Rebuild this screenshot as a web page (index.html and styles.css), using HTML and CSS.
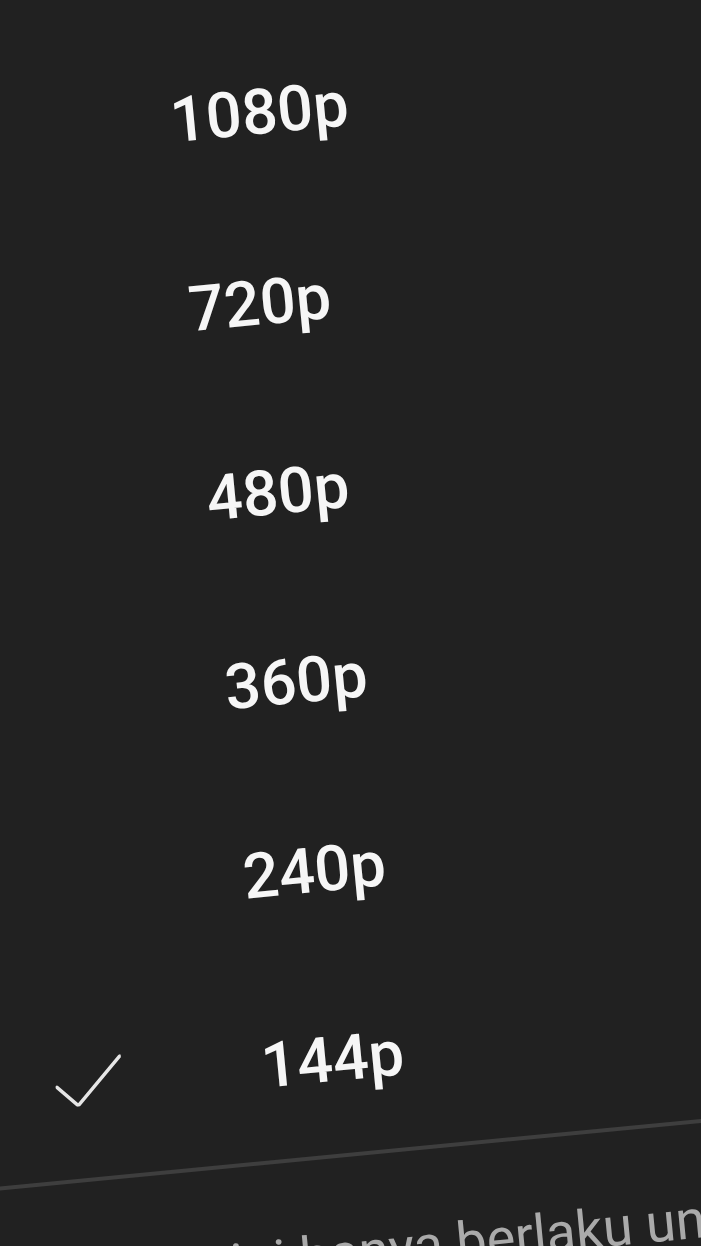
FILE: index.html
```html
<!DOCTYPE html>
<html lang="id">
<head>
<meta charset="utf-8">
<title>Kualitas</title>
<link rel="stylesheet" href="styles.css">
</head>
<body>
<div class="sheet">
  <ul class="quality-list">
    <li class="quality-item"><span class="check"></span><span class="label">1080p</span></li>
    <li class="quality-item"><span class="check"></span><span class="label">720p</span></li>
    <li class="quality-item"><span class="check"></span><span class="label">480p</span></li>
    <li class="quality-item"><span class="check"></span><span class="label">360p</span></li>
    <li class="quality-item"><span class="check"></span><span class="label">240p</span></li>
    <li class="quality-item selected">
      <span class="check">
        <svg viewBox="0 0 68 48" width="68" height="48"><path d="M1.5 26.8 L21 47 L67 1.5" fill="none" stroke="#e6e6e6" stroke-width="3.4" stroke-linecap="round" stroke-linejoin="round"/></svg>
      </span>
      <span class="label">144p</span>
    </li>
  </ul>
  <div class="divider"></div>
  <p class="footer-note">Pilihan ini hanya berlaku untuk video ini</p>
</div>
</body>
</html>
```

FILE: styles.css
```css
html, body {
  margin: 0;
  padding: 0;
  background: #212121;
}
body {
  width: 701px;
  height: 1246px;
  overflow: hidden;
  font-family: Roboto, "Noto Sans", "Liberation Sans", sans-serif;
}
.sheet {
  width: 960px;
  padding-top: 41px;
  transform-origin: 0 0;
  transform: rotate(-5.5deg) translateX(-120px);
}
.quality-list {
  list-style: none;
  margin: 0;
  padding: 0;
}
.quality-item {
  height: 190px;
  display: flex;
  align-items: center;
}
.check {
  width: 278px;
  padding-left: 71px;
  box-sizing: border-box;
  display: flex;
  align-items: center;
  flex-shrink: 0;
}
.check svg {
  display: block;
  margin-top: -3px;
}
.label {
  font-size: 63px;
  font-weight: 500;
  color: #f6f6f6;
  line-height: 1;
}
.divider {
  height: 4px;
  background: #3e3e3e;
  margin-top: 0;
}
.footer-note {
  margin: 64px 0 0 0;
  padding-left: 53px;
  font-size: 54px;
  line-height: 1.2;
  color: #aaaaaa;
  white-space: nowrap;
}
```
